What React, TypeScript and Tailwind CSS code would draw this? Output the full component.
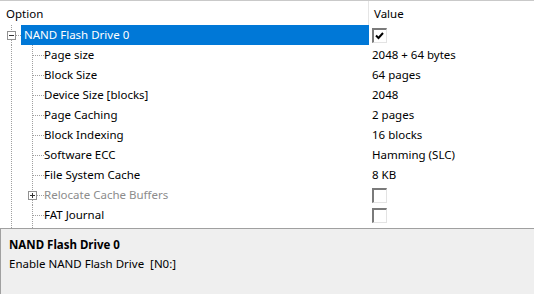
import React from "react";

type Row = {
  label: string;
  value?: string;
  check?: boolean;
  kind: "root" | "child" | "expand";
  gray?: boolean;
  selected?: boolean;
};

const rows: Row[] = [
  { label: "NAND Flash Drive 0", check: true, kind: "root", selected: true },
  { label: "Page size", value: "2048 + 64 bytes", kind: "child" },
  { label: "Block Size", value: "64 pages", kind: "child" },
  { label: "Device Size [blocks]", value: "2048", kind: "child" },
  { label: "Page Caching", value: "2 pages", kind: "child" },
  { label: "Block Indexing", value: "16 blocks", kind: "child" },
  { label: "Software ECC", value: "Hamming (SLC)", kind: "child" },
  { label: "File System Cache", value: "8 KB", kind: "child" },
  { label: "Relocate Cache Buffers", check: false, kind: "expand", gray: true },
  { label: "FAT Journal", check: false, kind: "child" },
  { label: "", check: false, kind: "child" },
];

const DOT = "#a0a0a0";

function Guides({ kind }: { kind: Row["kind"] }) {
  if (kind === "root") {
    return (
      <svg width="21" height="20" className="shrink-0 block">
        <line x1="11.5" y1="0" x2="11.5" y2="6" stroke={DOT} strokeDasharray="1 1" />
        <line x1="11.5" y1="15" x2="11.5" y2="20" stroke={DOT} strokeDasharray="1 1" />
        <rect x="7.5" y="6.5" width="8" height="8" fill="#fff" stroke="#919191" />
        <line x1="9" y1="10.5" x2="14" y2="10.5" stroke="#333" />
        <line x1="16" y1="10.5" x2="21" y2="10.5" stroke={DOT} strokeDasharray="1 1" />
      </svg>
    );
  }
  if (kind === "expand") {
    return (
      <svg width="44" height="20" className="shrink-0 block">
        <line x1="11.5" y1="0" x2="11.5" y2="20" stroke={DOT} strokeDasharray="1 1" />
        <line x1="32.5" y1="0" x2="32.5" y2="6" stroke={DOT} strokeDasharray="1 1" />
        <line x1="32.5" y1="15" x2="32.5" y2="20" stroke={DOT} strokeDasharray="1 1" />
        <rect x="28.5" y="6.5" width="8" height="8" fill="#fff" stroke="#919191" />
        <line x1="30" y1="10.5" x2="35" y2="10.5" stroke="#333" />
        <line x1="32.5" y1="8" x2="32.5" y2="13" stroke="#333" />
        <line x1="37" y1="10.5" x2="44" y2="10.5" stroke={DOT} strokeDasharray="1 1" />
      </svg>
    );
  }
  return (
    <svg width="44" height="20" className="shrink-0 block">
      <line x1="11.5" y1="0" x2="11.5" y2="20" stroke={DOT} strokeDasharray="1 1" />
      <line x1="32.5" y1="0" x2="32.5" y2="20" stroke={DOT} strokeDasharray="1 1" />
      <line x1="33" y1="10.5" x2="44" y2="10.5" stroke={DOT} strokeDasharray="1 1" />
    </svg>
  );
}

function CheckBox({ checked }: { checked: boolean }) {
  return (
    <div className="w-[15px] h-[15px] border-t-2 border-l-2 border-t-[#7a7a7a] border-l-[#7a7a7a] border-r border-b border-r-[#e3e3e3] border-b-[#e3e3e3] bg-white flex items-start justify-start pl-[1px] pt-[2px]">
      {checked && (
        <svg width="9" height="8" viewBox="0 0 9 8">
          <path d="M1 3.5 L3.5 6 L8 1" fill="none" stroke="#000" strokeWidth="2" />
        </svg>
      )}
    </div>
  );
}

export default function App() {
  return (
    <div
      className="w-[534px] h-[294px] flex flex-col overflow-hidden bg-white text-[11.5px] text-black"
      style={{ fontFamily: '"Noto Sans", sans-serif' }}
    >
      <div className="flex-1 min-h-0 overflow-hidden border-t border-[#c9c9c9] flex flex-col">
        <div className="h-[24px] shrink-0 flex">
          <div className="w-[369px] shrink-0 border-r border-[#e5e5e5] pl-[6px] flex items-center pt-[2px]">Option</div>
          <div className="pl-[5px] flex items-center pt-[2px]">Value</div>
        </div>
        {rows.map((r, i) => (
          <div key={i} className="h-[20px] shrink-0 flex">
            <div className="w-[369px] shrink-0 flex">
              <Guides kind={r.kind} />
              <div
                className={
                  "flex-1 flex items-center leading-none " +
                  (r.selected ? "bg-[#0078d7] text-white pl-[3px]" : r.gray ? "text-[#8c8c8c]" : "")
                }
              >
                {r.label}
              </div>
            </div>
            <div className="flex-1 pl-[3px] flex items-center">
              {r.value !== undefined ? r.value : <CheckBox checked={!!r.check} />}
            </div>
          </div>
        ))}
      </div>
      <div className="h-[66px] shrink-0 border-t border-l border-[#a0a0a0] bg-[#efefef] pl-[8px] pt-[6px] leading-[19px]">
        <div className="font-bold">NAND Flash Drive 0</div>
        <div>Enable NAND Flash Drive&nbsp;&nbsp;[N0:]</div>
      </div>
    </div>
  );
}
